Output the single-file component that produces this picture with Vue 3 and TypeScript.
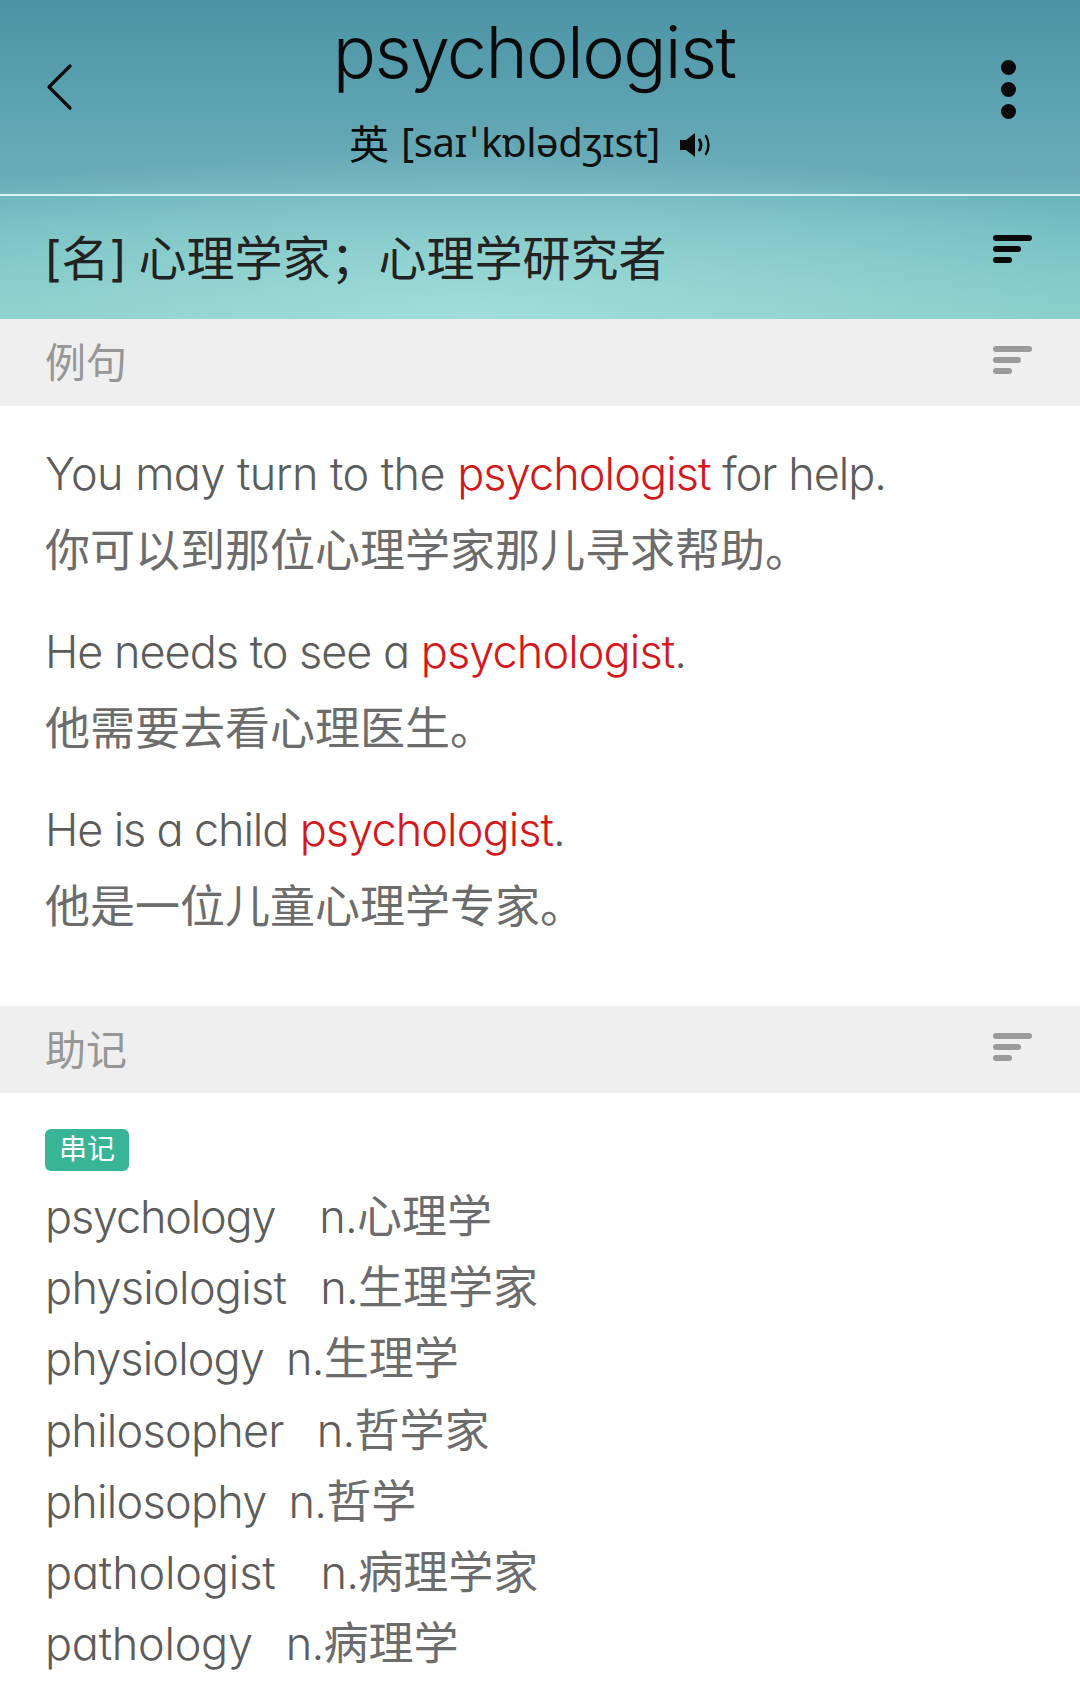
<script setup lang="ts">
interface Example { before: string; track: number; word: string; after: string; zh: string }

const examples: Example[] = [
  { before: 'You may turn to the ', track: -0.55, word: 'psychologist', after: ' for help.', zh: '你可以到那位心理学家那儿寻求帮助。' },
  { before: 'He needs to see a ', track: -1, word: 'psychologist', after: '.', zh: '他需要去看心理医生。' },
  { before: 'He is a child ', track: -1.14, word: 'psychologist', after: '.', zh: '他是一位儿童心理学专家。' },
]

// track: 每行英文的字距微调
const memo: { en: string; track: number; gap: number; zh: string }[] = [
  { en: 'psychology', track: -1.18, gap: 44, zh: '心理学' },
  { en: 'physiologist', track: -0.7, gap: 34, zh: '生理学家' },
  { en: 'physiology', track: -0.86, gap: 22, zh: '生理学' },
  { en: 'philosopher', track: -0.75, gap: 33, zh: '哲学家' },
  { en: 'philosophy', track: -0.75, gap: 22, zh: '哲学' },
  { en: 'pathologist', track: -0.16, gap: 45, zh: '病理学家' },
  { en: 'pathology', track: -0.27, gap: 33, zh: '病理学' },
]
</script>

<template>
  <div class="page">
    <div class="hero">
      <header class="top">
        <svg class="back" width="30" height="50" viewBox="0 0 30 50">
          <path d="M24 4 L3 25 L24 46" fill="none" stroke="#0a0a0a" stroke-width="3.2" stroke-linecap="round" stroke-linejoin="round" />
        </svg>
        <div class="head">
          <h1 class="word">psychologist</h1>
          <div class="phon">
            <span class="ying">英</span>
            <span class="ipa">[saɪ<i>ˈ</i>kɒlədʒɪst]</span>
            <svg width="32" height="24" viewBox="0 0 32 24">
              <path d="M0 7 H6 L15 0 V24 L6 17 H0 Z" fill="#0a0a0a" />
              <path d="M19.5 7 Q22.5 12 19.5 17" fill="none" stroke="#0a0a0a" stroke-width="3" stroke-linecap="round" />
              <path d="M26 3 Q31 12 26 21" fill="none" stroke="#0a0a0a" stroke-width="2.4" stroke-linecap="round" />
            </svg>
          </div>
        </div>
        <div class="dots"><i></i><i></i><i></i></div>
      </header>
      <div class="meaning">
        <span>[名] 心理学家；心理学研究者</span>
        <div class="bars dark"><i></i><i></i><i></i></div>
      </div>
    </div>

    <div class="sec">
      <span>例句</span>
      <div class="bars"><i></i><i></i><i></i></div>
    </div>
    <div class="examples">
      <div v-for="ex in examples" :key="ex.zh" class="ex">
        <p class="en"><span :style="{ letterSpacing: ex.track + 'px' }">{{ ex.before }}</span><em>{{ ex.word }}</em>{{ ex.after }}</p>
        <p class="zh">{{ ex.zh }}</p>
      </div>
    </div>

    <div class="sec">
      <span>助记</span>
      <div class="bars"><i></i><i></i><i></i></div>
    </div>
    <div class="memo">
      <span class="tag">串记</span>
      <p v-for="m in memo" :key="m.en" class="line">
        <span class="en" :style="{ letterSpacing: m.track + 'px', marginRight: m.gap + 'px' }">{{ m.en }}</span><span class="en">n.</span><span class="zh">{{ m.zh }}</span>
      </p>
    </div>
  </div>
</template>

<style>
html, body { margin: 0; background: #fff; }
</style>

<style scoped>
.page {
  width: 1080px;
  height: 1704px;
  overflow: hidden;
  background: #fff;
  font-family: Inter, "Noto Sans", "Noto Sans CJK SC", sans-serif;
  font-feature-settings: "cv11";
  font-weight: 400;
  color: #6c6c6c;
}
.hero {
  background:
    radial-gradient(ellipse 760px 170px at 44% 100%, rgba(172, 228, 224, 0.7), rgba(172, 228, 224, 0)),
    linear-gradient(180deg, #4b93a5 0%, #6aadb9 55%, #74bcc2 70%, #84cdc6 100%);
  color: #0a0a0a;
}
.top {
  height: 194px;
  display: grid;
  grid-template-columns: 1fr auto 1fr;
  align-items: start;
  padding: 0 45px;
  border-bottom: 2px solid #dff1f1;
}
.back { margin-top: 62px; margin-left: 1px; }
.head { display: flex; flex-direction: column; align-items: center; margin-right: 12px; }
.word {
  margin: 12px 0 0;
  font-size: 72px;
  line-height: 80px;
  font-weight: 300;
  letter-spacing: -1.7px;
}
.phon {
  margin: 22px 7px 0 0;
  display: flex;
  align-items: center;
  font-size: 40px;
  line-height: 50px;
  white-space: nowrap;
}
.ying { margin: 6px 12px 0 0; }
.ipa { letter-spacing: -0.4px; margin-right: 20px; font-family: "Noto Sans", "Liberation Sans", sans-serif; color: #111; }
.ipa i { font-style: normal; margin: 0 4px; }
.phon svg { margin-top: 6px; }
.dots {
  justify-self: end;
  margin-top: 60px;
  display: flex;
  flex-direction: column;
  gap: 7px;
  padding-right: 19px;
}
.dots i { width: 15px; height: 15px; border-radius: 50%; background: #0a0a0a; }
.meaning {
  height: 123px;
  display: flex;
  justify-content: space-between;
  padding: 0 48px 0 44px;
  font-size: 48px;
  line-height: 125px;
  word-spacing: -2px;
  color: #222;
}
.meaning .bars { margin-top: 39px; }
.bars { display: flex; flex-direction: column; gap: 5px; width: 39px; }
.bars i { display: block; height: 6px; border-radius: 3px; background: #9a9a9a; }
.bars i:nth-child(1) { width: 39px; }
.bars i:nth-child(2) { width: 28px; }
.bars i:nth-child(3) { width: 19px; }
.bars.dark i { background: #0a0a0a; }
.sec {
  height: 87px;
  box-sizing: border-box;
  padding: 0 48px 5px 45px;
  background: #efefef;
  display: flex;
  justify-content: space-between;
  align-items: center;
  font-size: 41px;
  color: #979797;
}
.examples { height: 600px; padding: 29px 45px 0; box-sizing: border-box; }
.ex { margin-bottom: 24px; }
.ex p {
  margin: 0;
  font-size: 45px;
  line-height: 77px;
  white-space: nowrap;
}
.en { font-weight: 300; letter-spacing: -0.75px; color: #5c5c5c; }
.ex .en { letter-spacing: -1px; }
.ex em { font-style: normal; color: #d3181c; letter-spacing: -0.9px; }
.memo { padding: 36px 45px 0; }
.tag {
  display: block;
  width: 84px;
  height: 42px;
  margin-bottom: 10px;
  line-height: 40px;
  text-align: center;
  border-radius: 6px;
  background: #38b497;
  color: #fff;
  font-size: 28px;
}
.line {
  margin: 0;
  font-size: 45px;
  line-height: 71.2px;
  white-space: nowrap;
}
</style>
